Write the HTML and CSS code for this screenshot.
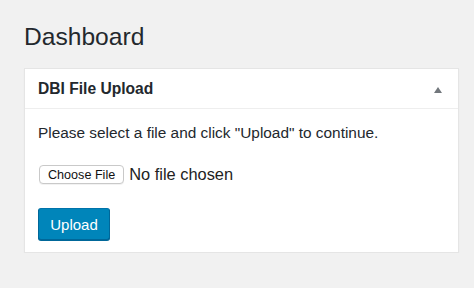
FILE: index.html
```html
<!DOCTYPE html>
<html>
<head>
<title>Dashboard</title>
<link rel="stylesheet" href="styles.css">
</head>
<body>
<div class="wrap">
  <h1 class="page-title">Dashboard</h1>
  <div class="postbox">
    <div class="postbox-head">
      <h2 class="hndle">DBI File Upload</h2>
      <span class="toggle-arrow"></span>
    </div>
    <div class="inside">
      <p class="intro">Please select a file and click "Upload" to continue.</p>
      <div class="file-row">
        <button type="button" class="choose-btn">Choose File</button>
        <span class="file-name">No file chosen</span>
      </div>
      <button type="button" class="upload-btn">Upload</button>
    </div>
  </div>
</div>
</body>
</html>
```

FILE: styles.css
```css
body{
  margin:0;
  background:#f1f1f1;
  font-family:"Liberation Sans", Arial, sans-serif;
  color:#23282d;
}
.wrap{padding:0 15px 0 24px;}
.page-title{
  font-size:24.6px;
  font-weight:400;
  margin:0;
  padding:23px 0 0;
  line-height:28px;
  height:45px;
}
.postbox{
  background:#fff;
  border:1px solid #e5e5e5;
  box-shadow:0 1px 1px rgba(0,0,0,.06);
}
.postbox-head{
  display:flex;
  align-items:center;
  justify-content:space-between;
  height:39px;
  border-bottom:1px solid #eee;
  padding:0 16px 0 13px;
}
.hndle{margin:0;font-size:15.6px;font-weight:700;}
.toggle-arrow{
  width:0;height:0;
  border-left:4px solid transparent;
  border-right:4px solid transparent;
  border-bottom:6px solid #72777c;
  margin-top:2px;
}
.inside{padding:15px 13px 12px;}
.intro{margin:0;font-size:15.4px;line-height:18px;color:#23282d;}
.file-row{display:flex;align-items:center;margin:23px 0 24px 1px;}
.choose-btn{
  font-family:inherit;
  font-size:12.6px;
  height:19px;
  padding:0 8px;
  background:#fff;
  border:1px solid #c9c9c9;
  border-radius:4px;
  color:#111;
  margin-right:5px;
  box-shadow:0 1px 0 rgba(0,0,0,.05);
}
.file-name{font-size:16.4px;color:#222;}
.upload-btn{
  font-family:inherit;
  font-size:15px;
  height:32px;
  width:72px;
  background:#0085ba;
  border:1px solid #0073aa;
  border-color:#0073aa #006799 #006799;
  border-radius:3px;
  box-shadow:0 1px 0 #006799;
  color:#fff;
  padding:0;
  display:block;
}
```
